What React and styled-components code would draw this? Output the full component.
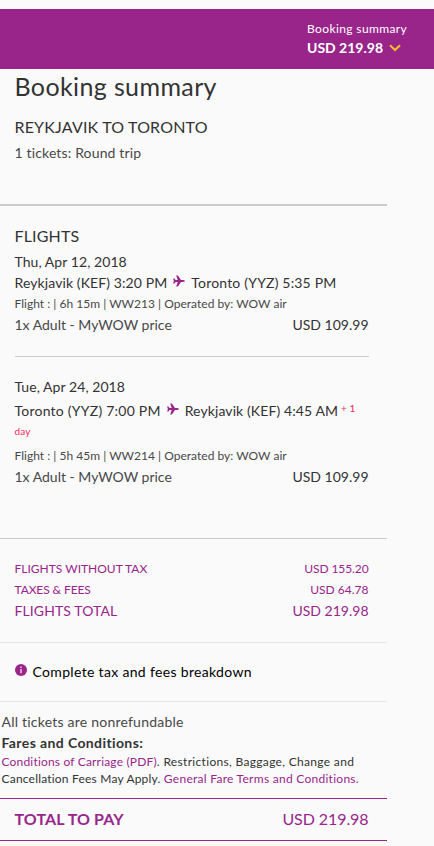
import styled, { createGlobalStyle } from 'styled-components';

const purple = '#99258b';
const lightText = '#484848';

const GlobalStyle = createGlobalStyle`
  body {
    background: #fafafa;
    color: #333;
    font-family: Lato, "Liberation Sans", sans-serif;
    margin: 0;
  }
`;

const Page = styled.div`
  padding-top: 9px;
`;

const Text = styled.span`
  color: ${p => p.$color || 'inherit'};
  font-size: ${p => p.$size || 14}px;
  font-weight: ${p => p.$bold ? 700 : 400};
  letter-spacing: ${p => p.$spacing || 0}px;
  white-space: pre;
`;

const TopBar = styled.header`
  background: ${purple};
  color: #fff;
  display: flex;
  height: 60px;
  justify-content: flex-end;
`;

const TopBarSummary = styled.div`
  box-sizing: border-box;
  display: flex;
  flex-direction: column;
  padding-top: 10px;
  width: 127px;
`;

const TopBarLine = styled.div`
  align-items: center;
  display: flex;
  gap: 6px;
  height: 19px;
`;

const Summary = styled.main`
  width: 387px;
`;

const Intro = styled.section`
  border-bottom: 2px solid #ccc;
  box-sizing: border-box;
  height: 137px;
  padding: 2px 0 0 14.5px;
`;

const Title = styled.h1`
  font-size: 25px;
  font-weight: 400;
  letter-spacing: 0.38px;
  line-height: 30px;
  margin: 0 0 14px;
`;

const Heading = styled.h2`
  font-size: 16px;
  font-weight: 400;
  letter-spacing: 0.17px;
  line-height: 24px;
  margin: 0 0 3px;
`;

const Line = styled.div`
  align-items: center;
  display: flex;
  height: ${p => p.$height || 21}px;
`;

const Flights = styled.section`
  border-bottom: 1px solid #ccc;
  box-sizing: border-box;
  height: 333px;
  padding: 18px 18.5px 0 14.5px;
`;

const Flight = styled.div`
  & + & {
    border-top: 1px solid #ccc;
    margin-top: 21px;
    padding-top: 19px;
  }
`;

const Route = styled.div`
  align-items: center;
  display: flex;
  height: 21px;
  margin-top: ${p => p.$nextDay ? 3 : 0}px;
`;

const PlaneSvg = styled.svg`
  flex: none;
  height: 14px;
  margin: 0 6px 3px;
  width: 12px;
`;

const DayShift = styled(Text)`
  margin: -6px 0 0 3px;
`;

const DayLine = styled(Line)`
  margin-bottom: 4px;
`;

const SplitRow = styled.div`
  align-items: center;
  color: ${p => p.$color || 'inherit'};
  display: flex;
  height: 21px;
  justify-content: space-between;
`;

const Totals = styled.section`
  border-bottom: 1px solid #e6e6e6;
  box-sizing: border-box;
  height: 104px;
  padding: 19px 18.5px 0 14.5px;
`;

const Breakdown = styled.section`
  align-items: center;
  border-bottom: 1px solid #e6e6e6;
  box-sizing: border-box;
  color: #000;
  display: flex;
  gap: 5.5px;
  height: 59px;
  padding: 0 0 2px 15px;
`;

const InfoSvg = styled.svg`
  height: 12px;
  margin-bottom: 3px;
  width: 12px;
`;

const Conditions = styled.section`
  border-bottom: 1px solid ${purple};
  box-sizing: border-box;
  height: 97px;
  padding: 9px 0 0 1.5px;
`;

const TotalToPay = styled.section`
  border-bottom: 1px solid ${purple};
  box-sizing: border-box;
  height: 42px;
  padding: 9px 18.5px 0 14.5px;
`;

const Chevron = () => (
  <svg width="12" height="8" viewBox="0 0 12 8">
    <path d="M1 1.2 L6 6 L11 1.2" fill="none" stroke="#f3c02b" strokeWidth="2" />
  </svg>
);

const Plane = () => (
  <PlaneSvg viewBox="0 0 12 14">
    <path
      d="M12 7 Q11.5 6 10 6 L8 6 L4.9 1.4 L3.2 1.4 L4.7 6 L2.6 6.1 L1.4 4.6 L0.1 4.6 L0.9 7 L0.1 9.4 L1.4 9.4 L2.6 7.9 L4.7 8 L3.2 12.6 L4.9 12.6 L8 8 L10 8 Q11.5 8 12 7 Z"
      fill={purple}
    />
  </PlaneSvg>
);

const Info = () => (
  <InfoSvg viewBox="0 0 12 12">
    <circle cx="6" cy="6" r="6" fill={purple} />
    <path d="M5 2.6h2v1.4H5z M5 5h2v4.2H5z" fill="#d79dd0" />
  </InfoSvg>
);

const flights = [
  {
    date: 'Thu, Apr 12, 2018',
    from: 'Reykjavik (KEF) 3:20 PM',
    to: 'Toronto (YYZ) 5:35 PM',
    details: 'Flight : | 6h 15m | WW213 | Operated by: WOW air',
    spacing: [0.1, 0.18],
  },
  {
    date: 'Tue, Apr 24, 2018',
    from: 'Toronto (YYZ) 7:00 PM',
    to: 'Reykjavik (KEF) 4:45 AM',
    details: 'Flight : | 5h 45m | WW214 | Operated by: WOW air',
    spacing: [0.23, 0.1],
    nextDay: true,
  },
];

const FlightDetails = ({ date, from, to, details, spacing, nextDay }) => (
  <Flight>
    <Line><Text $spacing={0.06}>{date}</Text></Line>
    <Route $nextDay={nextDay}>
      <Text $spacing={spacing[0]}>{from}</Text>
      <Plane />
      <Text $spacing={spacing[1]}>{to}</Text>
      {nextDay && <DayShift $size={10} $color="#f0285a">+ 1</DayShift>}
    </Route>
    {nextDay && <DayLine $height={20}><Text $size={10} $spacing={0.2} $color="#f0285a">day</Text></DayLine>}
    <Line><Text $size={12} $spacing={0.02} $color={lightText}>{details}</Text></Line>
    <SplitRow>
      <Text $color={lightText}>1x Adult - MyWOW price</Text>
      <Text>USD 109.99</Text>
    </SplitRow>
  </Flight>
);

const App = () => (
  <>
    <GlobalStyle />
    <Page>
      <TopBar>
        <TopBarSummary>
          <TopBarLine><Text $size={12} $spacing={0.38}>Booking summary</Text></TopBarLine>
          <TopBarLine>
            <Text $bold>USD 219.98</Text>
            <Chevron />
          </TopBarLine>
        </TopBarSummary>
      </TopBar>
      <Summary>
        <Intro>
          <Title>Booking summary</Title>
          <Heading>REYKJAVIK TO TORONTO</Heading>
          <Line $height={20}><Text $spacing={0.15} $color={lightText}>1 tickets: Round trip</Text></Line>
        </Intro>
        <Flights>
          <Heading>FLIGHTS</Heading>
          {flights.map((flight) => <FlightDetails key={flight.date} {...flight} />)}
        </Flights>
        <Totals>
          <SplitRow $color={purple}>
            <Text $size={12}>FLIGHTS WITHOUT TAX</Text>
            <Text $size={12} $spacing={-0.1}>USD 155.20</Text>
          </SplitRow>
          <SplitRow $color={purple}>
            <Text $size={12} $spacing={-0.1}>TAXES &amp; FEES</Text>
            <Text $size={12}>USD 64.78</Text>
          </SplitRow>
          <SplitRow $color={purple}>
            <Text $spacing={0.1}>FLIGHTS TOTAL</Text>
            <Text>USD 219.98</Text>
          </SplitRow>
        </Totals>
        <Breakdown>
          <Info />
          <Text $spacing={0.33}>Complete tax and fees breakdown</Text>
        </Breakdown>
        <Conditions>
          <Line><Text $spacing={0.22} $color={lightText}>All tickets are nonrefundable</Text></Line>
          <Line><Text $bold $spacing={0.39}>Fares and Conditions:</Text></Line>
          <Line $height={17}>
            <Text $size={12} $spacing={0.18} $color={purple}>Conditions of Carriage (PDF)</Text>
            <Text $size={12} $spacing={0.32}>. Restrictions, Baggage, Change and</Text>
          </Line>
          <Line $height={17}>
            <Text $size={12} $spacing={0.2}>{'Cancellation Fees May Apply. '}</Text>
            <Text $size={12} $spacing={0.27} $color={purple}>General Fare Terms and Conditions.</Text>
          </Line>
        </Conditions>
        <TotalToPay>
          <SplitRow $color={purple}>
            <Text $size={16} $bold $spacing={0.1}>TOTAL TO PAY</Text>
            <Text $size={16} $spacing={-0.08}>USD 219.98</Text>
          </SplitRow>
        </TotalToPay>
      </Summary>
    </Page>
  </>
);

export default App;
